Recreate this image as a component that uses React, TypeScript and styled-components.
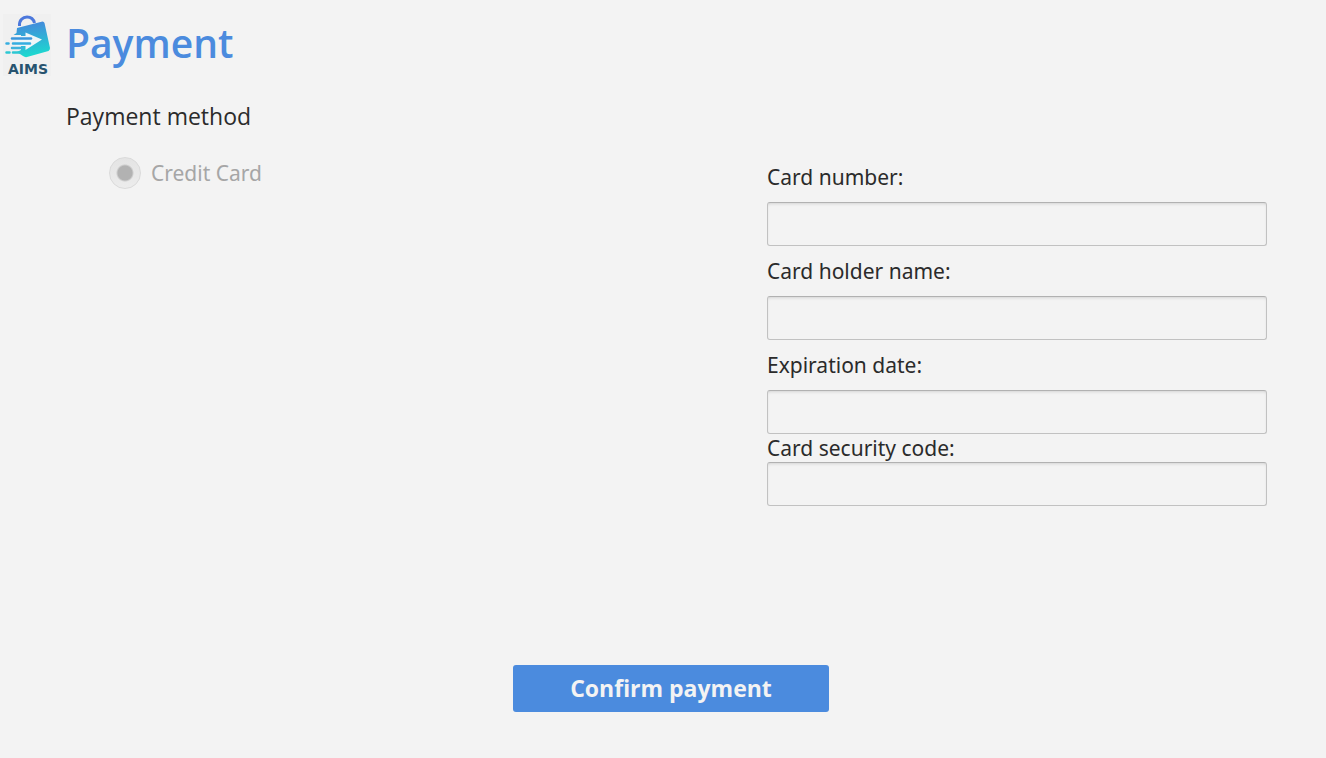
import React from 'react';
import styled, { createGlobalStyle } from 'styled-components';

const GlobalStyle = createGlobalStyle`
  * { box-sizing: border-box; }
  body {
    margin: 0;
    background: #f3f3f3;
    color: #2b2b2b;
    font-family: "Noto Sans", "Open Sans", sans-serif;
  }
`;

const Page = styled.main`
  min-height: 100vh;
  display: flex;
  flex-direction: column;
`;

const Header = styled.header`
  display: flex;
  gap: 15px;
  padding: 14px 3px 0;
`;

const Logo = styled.svg`
  flex: none;
  width: 48px;
  height: 66px;
`;

const Title = styled.h1`
  margin: 0;
  color: #4b8bde;
  font: 600 39px/58px "Open Sans", "Noto Sans", sans-serif;
`;

const Columns = styled.div`
  display: grid;
  grid-template-columns: minmax(0, 701fr) minmax(0, 500fr);
  padding: 20px 59px 0 66px;
`;

const Methods = styled.fieldset`
  min-width: 0;
  margin: 0;
  padding: 0;
  border: 0;
`;

const Legend = styled.legend`
  padding: 0;
  font: 400 23px/32px "Open Sans", "Noto Sans", sans-serif;
`;

const Option = styled.label`
  display: flex;
  align-items: center;
  gap: 10px;
  margin: 25px 0 0 43px;
  color: #a6a6a6;
  font-size: 21px;
  line-height: 32px;
`;

const Radio = styled.input`
  appearance: none;
  width: 32px;
  height: 32px;
  margin: 0;
  border: 1px solid #dadada;
  border-radius: 50%;
  background:
    radial-gradient(circle, #b2b2b2 7px, transparent 9px),
    linear-gradient(#e4e4e4, #ececec);
`;

const Fields = styled.div`
  padding-top: 63px;
`;

const Field = styled.div`
  display: flex;
  flex-direction: column;
  gap: 11px;

  & + & {
    margin-top: 11px;
  }
`;

const CompactField = styled.div`
  display: flex;
  flex-direction: column;
`;

const Label = styled.label`
  font-size: 21px;
  line-height: 28px;
`;

const Input = styled.input`
  width: 100%;
  height: 44px;
  padding: 0 12px;
  border: 1px solid #c1c1c1;
  border-top-color: #b1b1b1;
  border-radius: 3px;
  background: #f3f3f3;
  box-shadow: inset 0 2px 3px -1px #d4d4d4;
  font: inherit;
`;

const Confirm = styled.button`
  align-self: center;
  width: 316px;
  height: 47px;
  margin: 159px 0 46px 16px;
  padding: 0 0 1px;
  border: 0;
  border-radius: 3px;
  background: #4b8bde;
  color: #f3f3f3;
  font: 700 23px/46px "Open Sans", "Noto Sans", sans-serif;
`;

function AimsLogo() {
  return (
    <Logo viewBox="0 0 48 66" role="img" aria-label="AIMS">
      <defs>
        <linearGradient id="bag" gradientUnits="userSpaceOnUse" x1="26" y1="8" x2="30" y2="43">
          <stop offset="0" stopColor="#4489dc" />
          <stop offset="1" stopColor="#1bdccf" />
        </linearGradient>
      </defs>
      <rect width="48" height="62" fill="#f0f0f0" />
      <path d="M16.5 12C16 6 20 3 24 3C28 3 30.500 5 31.500 9" fill="none" stroke="#4c78dc" strokeWidth="3" />
      <path d="M14 14L39.500 7.500Q41 7.500 41.500 9L47 34Q47 36 45.500 37L24 43Q22 43.500 20 42L14 38L18 36V21H10.500L13.500 19Z" fill="url(#bag)" />
      <path d="M22.500 18.500L39 25.500L22.500 36V32H13V22H22.500Z" fill="#eff6f8" />
      <g fill="none" strokeLinecap="round" strokeWidth="2.500">
        <path d="M9 24.500H28" stroke="#3b96db" />
        <path d="M3.500 29.500H5.500M10 29.500H27" stroke="#35ade0" />
        <path d="M9 34H20" stroke="#3fb3dc" />
        <path d="M3.500 38.500H6.500M10 38.500H19" stroke="#2cc8d3" />
      </g>
      <text x="5" y="60" fill="#27536f" fontFamily="DejaVu Sans, sans-serif" fontSize="14" fontWeight="700">AIMS</text>
    </Logo>
  );
}

export default function App() {
  return (
    <Page>
      <GlobalStyle />
      <Header>
        <AimsLogo />
        <Title>Payment</Title>
      </Header>
      <Columns>
        <Methods>
          <Legend>Payment method</Legend>
          <Option><Radio type="radio" name="method" defaultChecked disabled />Credit Card</Option>
        </Methods>
        <Fields>
          <Field><Label htmlFor="number">Card number:</Label><Input id="number" /></Field>
          <Field><Label htmlFor="holder">Card holder name:</Label><Input id="holder" /></Field>
          <Field><Label htmlFor="expiry">Expiration date:</Label><Input id="expiry" /></Field>
          <CompactField><Label htmlFor="code">Card security code:</Label><Input id="code" /></CompactField>
        </Fields>
      </Columns>
      <Confirm type="button">Confirm payment</Confirm>
    </Page>
  );
}
